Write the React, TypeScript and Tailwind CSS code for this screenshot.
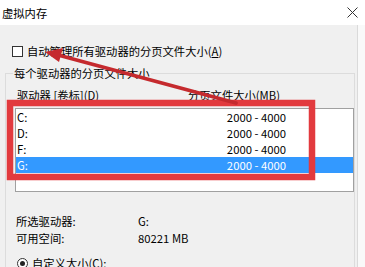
const font = { fontFamily: '"Noto Sans CJK SC", "Noto Sans", sans-serif' };

const drives = [
  { name: "C:", size: "2000 - 4000" },
  { name: "D:", size: "2000 - 4000" },
  { name: "F:", size: "2000 - 4000" },
  { name: "G:", size: "2000 - 4000", selected: true },
];

const Overlay = () => (
  <svg
    className="pointer-events-none absolute inset-0"
    width="365"
    height="267"
    viewBox="0 0 365 267"
  >
    <rect x="10" y="103" width="302" height="74" fill="none" stroke="#e23a3e" strokeWidth="6.5" />
    <line x1="236" y1="103" x2="58" y2="55" stroke="#c52a2e" strokeWidth="3.8" strokeLinecap="round" />
    <polygon points="45,52 59,62 63,48" fill="#c52a2e" />
  </svg>
);

export default function App() {
  return (
    <div
      className="relative h-[267px] w-[365px] overflow-hidden bg-white text-[11.3px] leading-[16px] text-black"
      style={font}
    >
      <div className="flex h-[25px] items-center justify-between pl-[2px] pr-[7px]">
        <span>虚拟内存</span>
        <svg width="11" height="11" viewBox="0 0 11 11">
          <path d="M0.5 0.5 L10.5 10.5 M10.5 0.5 L0.5 10.5" stroke="#333" strokeWidth="1" />
        </svg>
      </div>
      <div className="flex h-[242px]">
        <div className="w-[358px] border-r border-[#dadada] bg-[#f0f0f0] pt-[18px]">
          <label className="flex h-[16px] items-center gap-[4px] pl-[12px]">
            <span className="h-[11px] w-[11px] border border-[#333] bg-white" />
            <span>
              自动管理所有驱动器的分页文件大小(<u>A</u>)
            </span>
          </label>
          <fieldset className="ml-[5px] mt-[6px] h-[210px] w-[349px] border border-[#dcdcdc]">
            <legend className="ml-[7px] px-[1px]">每个驱动器的分页文件大小</legend>
            <div className="mt-[6px] flex h-[16px] pl-[11px]">
              <span className="w-[171px]">驱动器 [卷标](D)</span>
              <span>分页文件大小(MB)</span>
            </div>
            <div className="ml-[9px] mt-[5px] h-[84px] w-[339px] border border-[#a0a0a0] bg-white">
              {drives.map((d) => (
                <div
                  key={d.name}
                  className={`grid h-[16px] grid-cols-[202px_67px] items-center pl-[1px] ${
                    d.selected ? "bg-[#3399ff] text-white" : ""
                  }`}
                >
                  <span>{d.name}</span>
                  <span className="text-right">{d.size}</span>
                </div>
              ))}
            </div>
            <div className="mt-[21px] flex flex-col gap-[1px] pl-[10px]">
              <div className="flex">
                <span className="w-[122px]">所选驱动器:</span>
                <span>G:</span>
              </div>
              <div className="flex">
                <span className="w-[122px]">可用空间:</span>
                <span>80221 MB</span>
              </div>
            </div>
            <div className="mt-[9px] flex items-center gap-[4px] pl-[11px]">
              <span className="flex h-[11px] w-[11px] items-center justify-center rounded-full border border-[#333] bg-white">
                <span className="h-[5px] w-[5px] rounded-full bg-[#222]" />
              </span>
              <span>自定义大小(C):</span>
            </div>
          </fieldset>
        </div>
        <div className="flex-1 bg-[#f9f9f9]" />
      </div>
      <Overlay />
    </div>
  );
}
